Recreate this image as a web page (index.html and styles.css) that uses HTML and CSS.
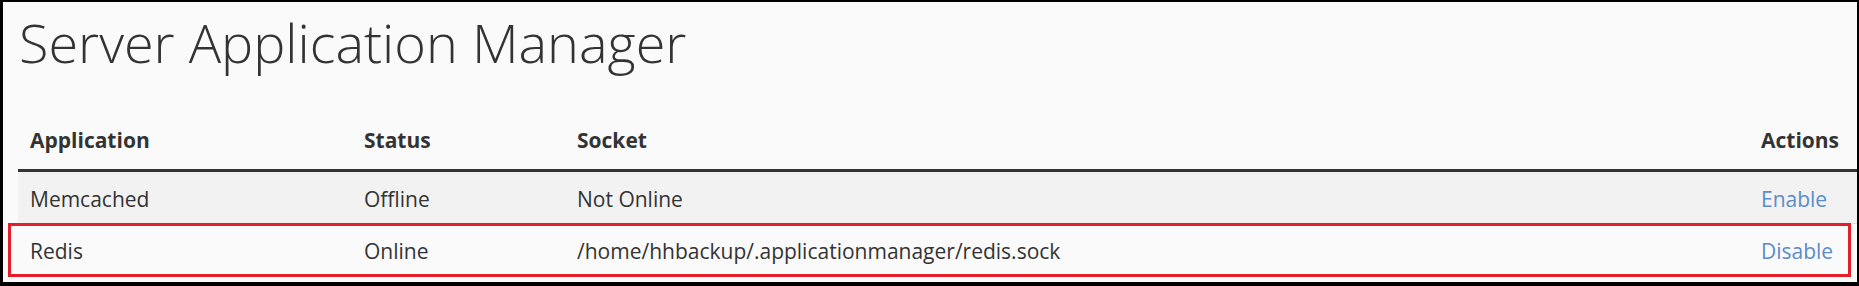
FILE: index.html
```html
<!DOCTYPE html>
<html lang="en">
<head>
<meta charset="utf-8">
<title>Server Application Manager</title>
<link rel="stylesheet" href="styles.css">
</head>
<body>
<div class="frame">
  <h1 class="title">Server Application Manager</h1>
  <table class="apps">
    <thead>
      <tr>
        <th class="col-app">Application</th>
        <th class="col-status">Status</th>
        <th class="col-socket">Socket</th>
        <th class="col-actions">Actions</th>
      </tr>
    </thead>
    <tbody>
      <tr class="striped">
        <td>Memcached</td>
        <td>Offline</td>
        <td>Not Online</td>
        <td><a href="#" class="action">Enable</a></td>
      </tr>
      <tr>
        <td>Redis</td>
        <td>Online</td>
        <td>/home/hhbackup/.applicationmanager/redis.sock</td>
        <td><a href="#" class="action">Disable</a></td>
      </tr>
    </tbody>
  </table>
  <div class="highlight"></div>
</div>
</body>
</html>
```

FILE: styles.css
```css
html, body {
  margin: 0;
  padding: 0;
  background: #000;
}

.frame {
  position: relative;
  box-sizing: border-box;
  height: 286px;
  border-style: solid;
  border-color: #000;
  border-width: 2px 2px 4px 3px;
  background: #fafafa;
  padding: 10px 0 0 15px;
  font-family: "Open Sans", "Liberation Sans", sans-serif;
  color: #333;
  overflow: hidden;
}

.title {
  margin: 0 0 44px 1px;
  font-size: 54px;
  font-weight: 300;
  line-height: 60px;
  color: #333;
}

.apps {
  width: 100%;
  border-collapse: collapse;
  font-size: 21px;
  line-height: 29px;
}

.apps th {
  text-align: left;
  font-weight: 700;
  padding: 10px 8px 14px 12px;
  border-bottom: 3px solid #333;
}

.apps td {
  padding: 13px 8px 9px 12px;
  border-top: 1px solid #ddd;
}

.apps tbody tr:first-child td {
  border-top: 0;
}

.col-app { width: 314px; }
.col-status { width: 193px; }
.col-socket { width: 1164px; }

.striped {
  background: #f2f2f2;
}

.action {
  color: #5b8ccc;
  text-decoration: none;
}

.highlight {
  position: absolute;
  left: 5px;
  top: 221px;
  width: 1837px;
  height: 48px;
  border: 3px solid #e41e2a;
}
```
